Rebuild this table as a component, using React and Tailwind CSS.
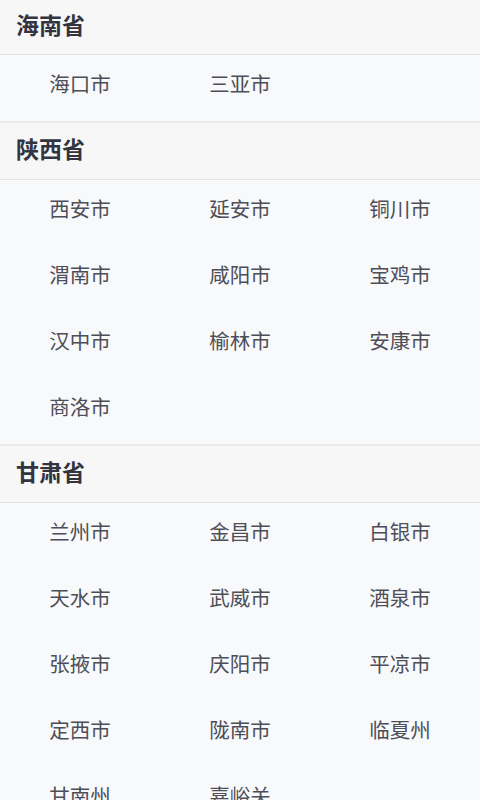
const provinces = [
  { name: "海南省", cities: ["海口市", "三亚市"] },
  {
    name: "陕西省",
    cities: ["西安市", "延安市", "铜川市", "渭南市", "咸阳市", "宝鸡市", "汉中市", "榆林市", "安康市", "商洛市"],
  },
  {
    name: "甘肃省",
    cities: ["兰州市", "金昌市", "白银市", "天水市", "武威市", "酒泉市", "张掖市", "庆阳市", "平凉市", "定西市", "陇南市", "临夏州", "甘南州", "嘉峪关"],
  },
];

const App = () => {
  return (
    <div
      className="h-[800px] overflow-hidden bg-[#f8f9fb]"
      style={{ fontFamily: '"Noto Sans", "Noto Sans CJK SC", sans-serif' }}
    >
      {provinces.map((p, i) => (
        <section key={p.name}>
          {/* Header */}
          <div
            className={
              i === 0
                ? "h-[55px] flex items-center px-4 bg-[#f7f7f8] border-b border-[#e4e4e6]"
                : "h-[59px] flex items-center px-4 bg-[#f7f7f8] border-t-2 border-t-[#ebebed] border-b border-b-[#e4e4e6]"
            }
          >
            <h2 className="text-[23px] font-bold text-[#323440] leading-none pb-[3px]">
              {p.name}
            </h2>
          </div>

          {/* Cities */}
          <div className="grid grid-cols-3">
            {p.cities.map((c) => (
              <div
                key={c}
                className="h-[66px] flex items-center justify-center pb-[7px] text-[20.5px] text-[#4d4e58]"
              >
                {c}
              </div>
            ))}
          </div>
        </section>
      ))}
    </div>
  );
};

export default App;
